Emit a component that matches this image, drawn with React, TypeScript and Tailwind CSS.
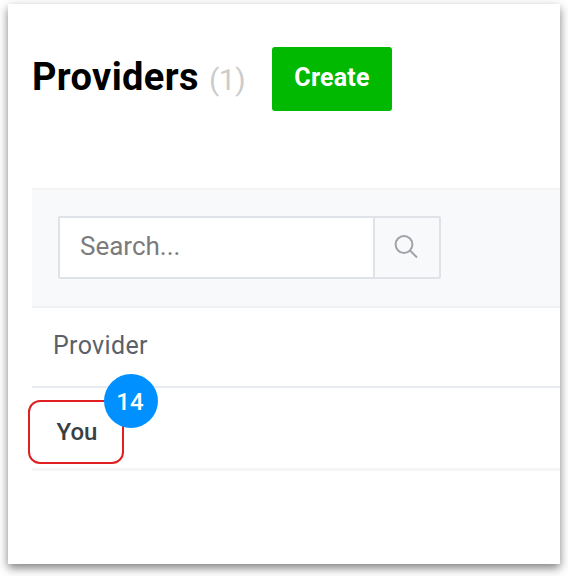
export default function App() {
  return (
    <div className="h-[576px] w-[568px] overflow-hidden bg-white pt-1 pl-2 font-[Roboto,sans-serif]">
      <main className="h-[560px] w-[552px] overflow-hidden bg-white pl-6 shadow-[0_4px_9px_rgba(0,0,0,0.5)]">
        <header className="flex h-[184px] items-start pt-[42px]">
          <h1 className="mt-[5px] w-[177px] text-[38px] leading-[52px] font-bold tracking-[0.35px] whitespace-nowrap text-black">Providers</h1>
          <span className="mt-2 w-[63px] text-[30px] leading-[52px] tracking-[-0.4px] text-[#cccccc]">(1)</span>
          <button className="mt-px h-16 w-[120px] rounded-[3px] bg-[#00b900] pb-[3px] text-[25px] font-bold tracking-[0.2px] text-white">Create</button>
        </header>
        <section className="h-[120px] border-y-2 border-t-[#f4f4f5] border-b-[#f0f1f3] bg-[#f8f9fb] pt-[26px] pl-[26px]">
          <div className="flex h-[63px] w-[383px] rounded-[2px] border-2 border-[#dfe2e6]">
            <div className="flex w-[313px] items-center bg-white pb-[3px] pl-5 text-[26px] text-[#7b7b7b]">Search...</div>
            <div className="flex flex-1 items-center justify-center border-l-2 border-[#dfe2e6] pr-0.5 pb-0.5">
              <svg width="24" height="24" viewBox="0 0 24 24" fill="none" stroke="#a0a4a9" strokeWidth="2"><circle cx="10" cy="9.5" r="8.4" /><path d="m16 15.5 7 7" /></svg>
            </div>
          </div>
        </section>
        <div className="flex h-[80px] items-center border-b-2 border-[#e8ebef] pb-[3px] pl-[21px] text-[25px] tracking-[0.35px] text-[#5b616a]">Provider</div>
        <div className="flex h-[83px] items-center border-b-[3px] border-[#f4f5f6] pt-2">
          <div className="relative -ml-1 flex h-16 w-24 items-center justify-center rounded-[12px] border-2 border-[#e02020] pl-0.5 text-[24px] font-medium text-[#3a3f43]">
            You
            <span className="absolute -top-7 left-[74px] flex size-[54px] items-center justify-center rounded-full bg-[#0090ff] pt-0.5 pr-0.5 text-[24px] text-white">14</span>
          </div>
        </div>
      </main>
    </div>
  );
}
